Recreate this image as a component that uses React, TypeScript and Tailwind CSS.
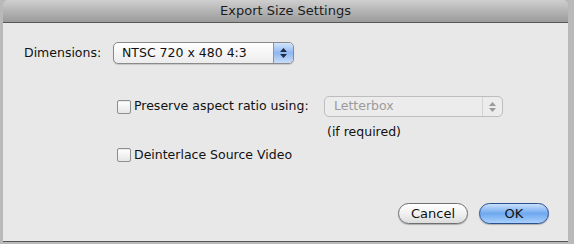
const font = { fontFamily: '"DejaVu Sans", "Liberation Sans", sans-serif' };

const Stepper = ({ blue }: { blue?: boolean }) => (
  <div
    className={
      blue
        ? 'w-[20px] h-full flex flex-col items-center justify-center gap-[2px] rounded-r-[4px] border-l border-[#7d95c4] bg-gradient-to-b from-[#d4e4fb] via-[#8fb7ef] to-[#c9dcf8]'
        : 'w-[20px] h-full flex flex-col items-center justify-center gap-[2px] rounded-r-[4px] border-l border-[#d4d4d4]'
    }
  >
    <svg width="7" height="4" viewBox="0 0 7 4">
      <path d="M3.5 0L7 4H0z" fill={blue ? '#1b2b4a' : '#9a9a9a'} />
    </svg>
    <svg width="7" height="4" viewBox="0 0 7 4">
      <path d="M0 0H7L3.5 4z" fill={blue ? '#1b2b4a' : '#9a9a9a'} />
    </svg>
  </div>
);

const Checkbox = () => (
  <div className="w-[14px] h-[14px] shrink-0 rounded-[2px] border border-[#8e8e8e] bg-gradient-to-b from-white to-[#e6e6e6] shadow-[inset_0_1px_1px_rgba(0,0,0,0.08)]" />
);

export default function App() {
  return (
    <div className="w-[574px] h-[244px] bg-[#b9b9b9] overflow-hidden" style={font}>
      <div className="ml-[3px] w-[565px] h-[242px] flex flex-col rounded-t-[5px] overflow-hidden border-b border-[#555]">
        {/* title bar */}
        <div className="h-[23px] shrink-0 flex items-center justify-center bg-gradient-to-b from-[#cfcfcf] to-[#9b9b9b] border-b border-[#575757] text-[13px] text-[#1c1c1c]">
          Export Size Settings
        </div>

        <div className="flex-1 bg-[#e8e8e8] flex flex-col text-[12.5px] text-[#111]">
          <div className="flex items-center mt-[19px] ml-[21px]">
            <span className="w-[89px]">Dimensions:</span>
            <div className="w-[181px] h-[22px] flex items-center rounded-[5px] border border-[#8a8a8a] bg-gradient-to-b from-white to-[#ececec] shadow-[0_1px_1px_rgba(0,0,0,0.15)] overflow-hidden">
              <span className="flex-1 pl-[8px]">NTSC 720 x 480 4:3</span>
              <Stepper blue />
            </div>
          </div>

          <div className="flex items-center mt-[32px] ml-[114px]">
            <Checkbox />
            <span className="ml-[3px] w-[190px]">Preserve aspect ratio using:</span>
            <div className="w-[179px] h-[21px] flex items-center rounded-[5px] border border-[#bdbdbd] bg-[#ececec] overflow-hidden">
              <span className="flex-1 pl-[9px] text-[#9b9b9b]">Letterbox</span>
              <Stepper />
            </div>
          </div>

          <div className="ml-[324px] mt-[6px]">(if required)</div>

          <div className="flex items-center mt-[4px] ml-[114px]">
            <Checkbox />
            <span className="ml-[3px]">Deinterlace Source Video</span>
          </div>

          <div className="flex justify-end gap-[11px] mt-auto mb-[17px] mr-[19px]">
            <button className="w-[70px] h-[21px] rounded-full border border-[#6f6f6f] bg-gradient-to-b from-white via-[#f1f1f1] to-[#dcdcdc] shadow-[0_1px_1px_rgba(0,0,0,0.25)] text-[13px] text-[#111]">
              Cancel
            </button>
            <button className="w-[70px] h-[21px] rounded-full border border-[#2b4f8e] bg-gradient-to-b from-[#c9e0fb] via-[#6ea8ef] to-[#a9d0fb] shadow-[0_1px_1px_rgba(0,0,0,0.25)] text-[13px] text-[#111]">
              OK
            </button>
          </div>
        </div>
      </div>
    </div>
  );
}
